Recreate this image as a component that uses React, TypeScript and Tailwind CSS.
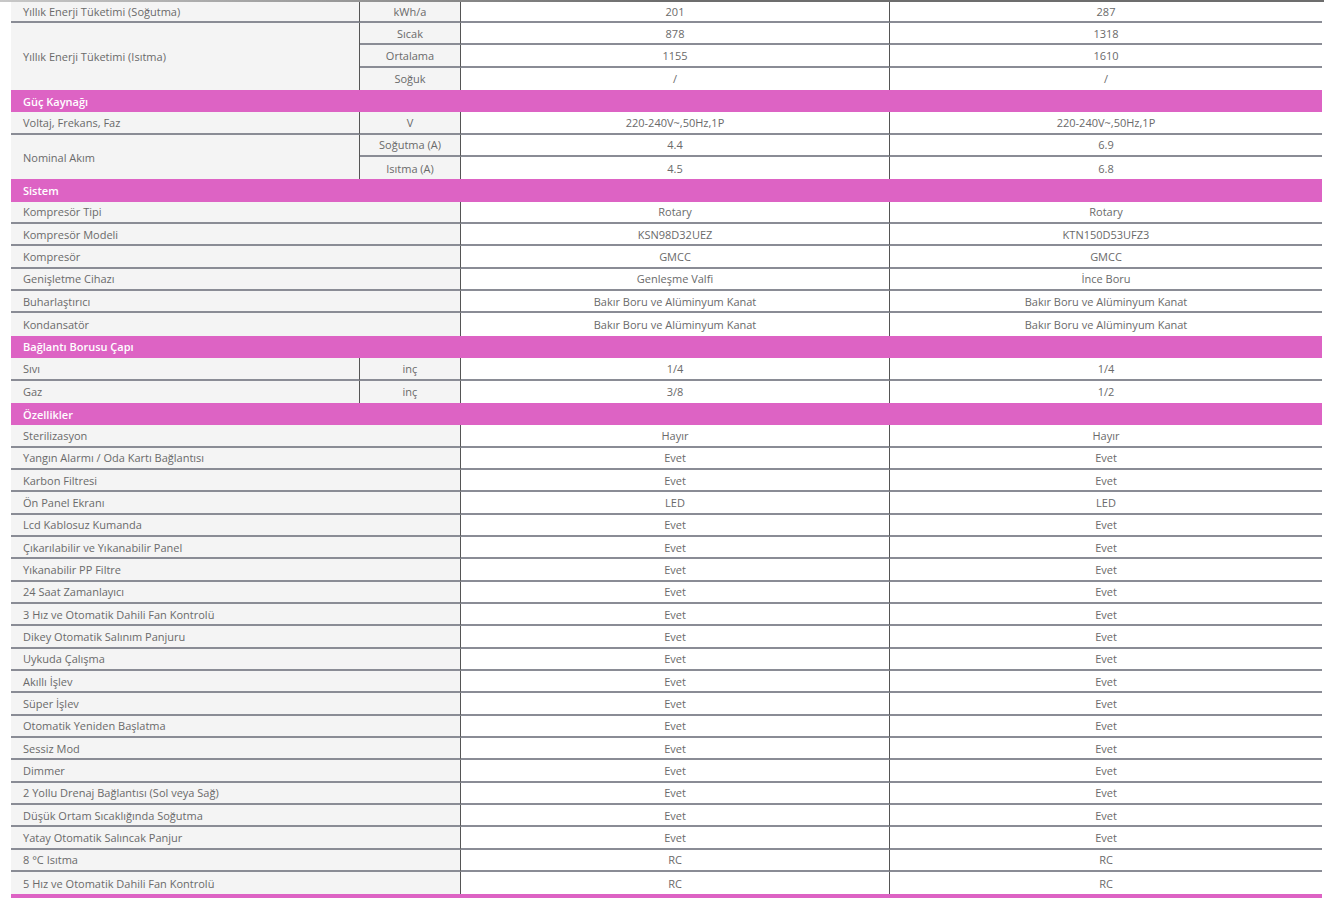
import React from 'react';

type Row =
  | { kind: 'head'; title: string }
  | { kind: 'row'; label?: string; span?: number; unit?: string; a: string; b: string };

const features: [string, string][] = [
  ['Sterilizasyon', 'Hayır'],
  ['Yangın Alarmı / Oda Kartı Bağlantısı', 'Evet'],
  ['Karbon Filtresi', 'Evet'],
  ['Ön Panel Ekranı', 'LED'],
  ['Lcd Kablosuz Kumanda', 'Evet'],
  ['Çıkarılabilir ve Yıkanabilir Panel', 'Evet'],
  ['Yıkanabilir PP Filtre', 'Evet'],
  ['24 Saat Zamanlayıcı', 'Evet'],
  ['3 Hız ve Otomatik Dahili Fan Kontrolü', 'Evet'],
  ['Dikey Otomatik Salınım Panjuru', 'Evet'],
  ['Uykuda Çalışma', 'Evet'],
  ['Akıllı İşlev', 'Evet'],
  ['Süper İşlev', 'Evet'],
  ['Otomatik Yeniden Başlatma', 'Evet'],
  ['Sessiz Mod', 'Evet'],
  ['Dimmer', 'Evet'],
  ['2 Yollu Drenaj Bağlantısı (Sol veya Sağ)', 'Evet'],
  ['Düşük Ortam Sıcaklığında Soğutma', 'Evet'],
  ['Yatay Otomatik Salıncak Panjur', 'Evet'],
  ['8 °C Isıtma', 'RC'],
  ['5 Hız ve Otomatik Dahili Fan Kontrolü', 'RC'],
];

const rows: Row[] = [
  { kind: 'row', label: 'Yıllık Enerji Tüketimi (Soğutma)', unit: 'kWh/a', a: '201', b: '287' },
  { kind: 'row', label: 'Yıllık Enerji Tüketimi (Isıtma)', span: 3, unit: 'Sıcak', a: '878', b: '1318' },
  { kind: 'row', unit: 'Ortalama', a: '1155', b: '1610' },
  { kind: 'row', unit: 'Soğuk', a: '/', b: '/' },
  { kind: 'head', title: 'Güç Kaynağı' },
  { kind: 'row', label: 'Voltaj, Frekans, Faz', unit: 'V', a: '220-240V~,50Hz,1P', b: '220-240V~,50Hz,1P' },
  { kind: 'row', label: 'Nominal Akım', span: 2, unit: 'Soğutma (A)', a: '4.4', b: '6.9' },
  { kind: 'row', unit: 'Isıtma (A)', a: '4.5', b: '6.8' },
  { kind: 'head', title: 'Sistem' },
  { kind: 'row', label: 'Kompresör Tipi', a: 'Rotary', b: 'Rotary' },
  { kind: 'row', label: 'Kompresör Modeli', a: 'KSN98D32UEZ', b: 'KTN150D53UFZ3' },
  { kind: 'row', label: 'Kompresör', a: 'GMCC', b: 'GMCC' },
  { kind: 'row', label: 'Genişletme Cihazı', a: 'Genleşme Valfi', b: 'İnce Boru' },
  { kind: 'row', label: 'Buharlaştırıcı', a: 'Bakır Boru ve Alüminyum Kanat', b: 'Bakır Boru ve Alüminyum Kanat' },
  { kind: 'row', label: 'Kondansatör', a: 'Bakır Boru ve Alüminyum Kanat', b: 'Bakır Boru ve Alüminyum Kanat' },
  { kind: 'head', title: 'Bağlantı Borusu Çapı' },
  { kind: 'row', label: 'Sıvı', unit: 'inç', a: '1/4', b: '1/4' },
  { kind: 'row', label: 'Gaz', unit: 'inç', a: '3/8', b: '1/2' },
  { kind: 'head', title: 'Özellikler' },
  ...features.map(([label, v]) => ({ kind: 'row' as const, label, a: v, b: v })),
];

const App: React.FC = () => {
  // a row gets a bottom rule unless a section header (or the end) follows it
  const lineBelow = (i: number) => i + 1 < rows.length && rows[i + 1].kind === 'row';

  return (
    <div
      className="w-[1338px] h-[898px] overflow-hidden bg-white text-[11px] text-[#6a6a6a]"
      style={{ fontFamily: '"Open Sans", "Noto Sans", sans-serif' }}
    >
      <div className="h-[2px] bg-gradient-to-r from-[#c8c8c8] via-[#6d6d6d] to-[#6d6d6d] w-[1324px]" />
      <div className="pl-[11px]">
        <table className="table-fixed border-separate border-spacing-0 w-[1311px]">
          <colgroup>
            <col className="w-[349px]" />
            <col className="w-[100px]" />
            <col className="w-[430px]" />
            <col className="w-[432px]" />
          </colgroup>
          <tbody>
            {rows.map((r, i) => {
              const h = i === 0 ? 'h-[21px]' : 'h-[22.35px]';
              if (r.kind === 'head') {
                return (
                  <tr key={i} className={h}>
                    <td colSpan={4} className="bg-[#dd63c4] text-white font-semibold pl-3 p-0 leading-none">
                      {r.title}
                    </td>
                  </tr>
                );
              }
              const line = lineBelow(i) ? 'border-b-2 border-b-[#8a8c95]' : '';
              const spanEnd = r.span ? i + r.span - 1 : i;
              const labelLine = lineBelow(spanEnd) ? 'border-b-2 border-b-[#8a8c95]' : '';
              return (
                <tr key={i} className={h}>
                  {r.label !== undefined && (
                    <td
                      rowSpan={r.span}
                      colSpan={r.unit ? 1 : 2}
                      className={`bg-[#f4f4f4] pl-3 p-0 leading-none align-middle ${labelLine} ${r.unit ? 'border-r border-r-[#555]' : ''}`}
                    >
                      {r.label}
                    </td>
                  )}
                  {r.unit && (
                    <td className={`bg-[#f4f4f4] text-center p-0 leading-none ${line}`}>{r.unit}</td>
                  )}
                  <td className={`border-l border-l-[#555] border-r border-r-[#555] text-center p-0 leading-none ${line}`}>
                    {r.a}
                  </td>
                  <td className={`text-center p-0 leading-none ${line}`}>{r.b}</td>
                </tr>
              );
            })}
            <tr className="h-[8px]">
              <td colSpan={4} className="bg-[#dd63c4] p-0" />
            </tr>
          </tbody>
        </table>
      </div>
    </div>
  );
};

export default App;
